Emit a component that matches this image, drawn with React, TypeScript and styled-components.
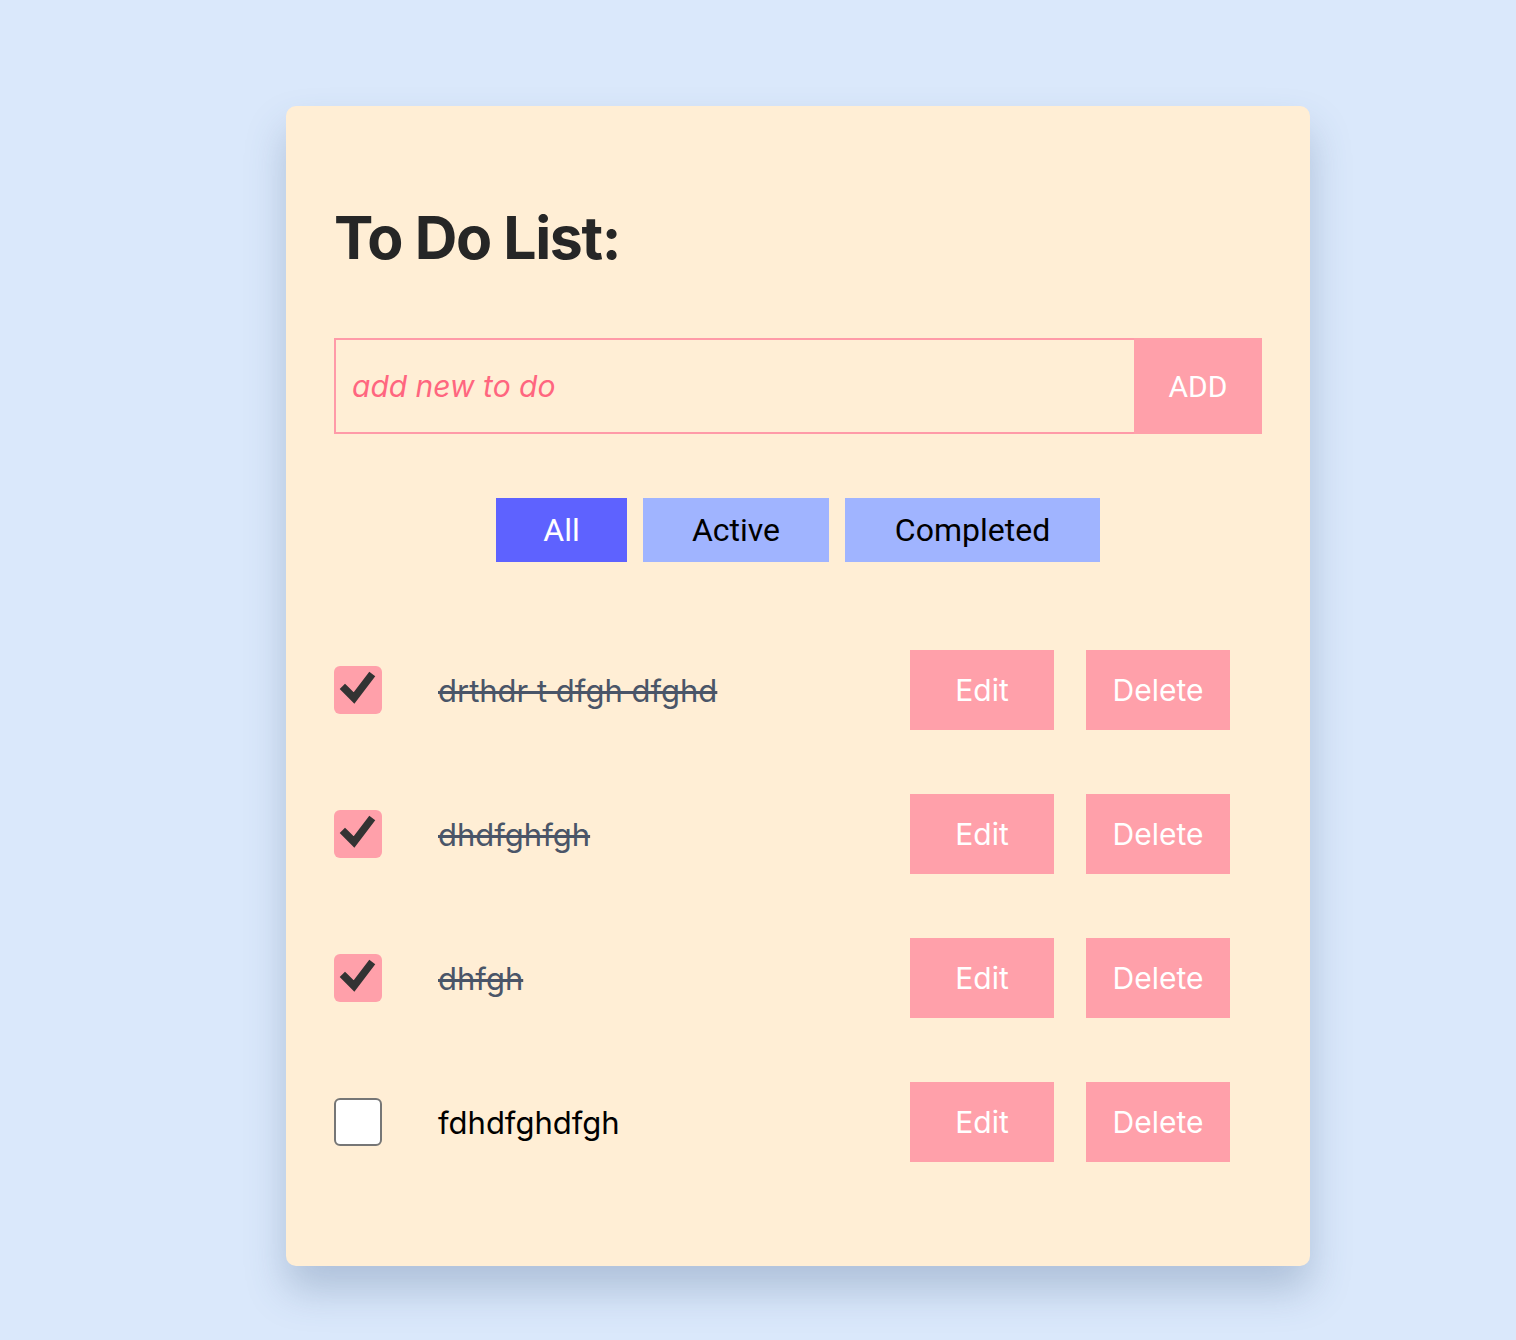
import React, { useState } from "react";
import styled, { createGlobalStyle, css } from "styled-components";

const GlobalStyle = createGlobalStyle`
  html, body { margin: 0; padding: 0; }
  body {
    background: #dae8fb;
    min-height: 1340px;
    font-family: Inter, "Noto Sans", sans-serif;
  }
`;

const Page = styled.div`
  padding: 106px 0 60px 286px;
`;

const Card = styled.div`
  width: 1024px;
  box-sizing: border-box;
  background: #ffeed5;
  border-radius: 10px;
  padding: 100px 48px 104px 48px;
  box-shadow: 0 24px 40px rgba(60, 90, 130, 0.28);
`;

const Title = styled.h1`
  margin: 0 0 68px 0;
  font-size: 59px;
  line-height: 64px;
  font-weight: 700;
  color: #262626;
  letter-spacing: -1.4px;
`;

const AddForm = styled.form`
  display: flex;
  height: 96px;
  margin: 0 0 64px 0;
`;

const TextInput = styled.input`
  flex: 1;
  box-sizing: border-box;
  height: 96px;
  border: 2px solid #ff9aa8;
  border-right: none;
  background: transparent;
  padding: 0 16px;
  font-family: Inter, sans-serif;
  font-size: 30px;
  color: #333;
  outline: none;
  &::placeholder {
    color: #ff667f;
    font-style: italic;
  }
`;

const AddButton = styled.button`
  width: 128px;
  height: 96px;
  border: none;
  background: #ffa0aa;
  color: #fff;
  font-family: Roboto, sans-serif;
  font-size: 30px;
  cursor: pointer;
`;

const Filters = styled.div`
  display: flex;
  justify-content: center;
  gap: 16px;
  margin-bottom: 88px;
`;

const FilterButton = styled.button<{ $active?: boolean; $w: number }>`
  width: ${(p) => p.$w}px;
  height: 64px;
  border: none;
  font-family: Roboto, sans-serif;
  font-size: 32px;
  cursor: pointer;
  ${(p) =>
    p.$active
      ? css`
          background: #5e62ff;
          color: #fff;
        `
      : css`
          background: #a0b4ff;
          color: #000;
        `}
`;

const List = styled.ul`
  list-style: none;
  margin: 0;
  padding: 0 32px 0 0;
  display: flex;
  flex-direction: column;
  gap: 64px;
`;

const Row = styled.li`
  display: flex;
  align-items: center;
  height: 80px;
  gap: 32px;
`;

const Check = styled.span<{ $checked: boolean }>`
  width: 48px;
  height: 48px;
  box-sizing: border-box;
  border-radius: 6px;
  flex: none;
  display: flex;
  align-items: center;
  justify-content: center;
  ${(p) =>
    p.$checked
      ? css`
          background: #ffa0aa;
        `
      : css`
          background: #fff;
          border: 2px solid #767676;
        `}
`;

const Label = styled.span<{ $done: boolean }>`
  flex: 1;
  margin-left: 24px;
  font-family: Inter, sans-serif;
  font-size: 31px;
  color: ${(p) => (p.$done ? "#4a5568" : "#000")};
  text-decoration: ${(p) => (p.$done ? "line-through" : "none")};
  text-decoration-thickness: 3px;
`;

const ActionButton = styled.button`
  width: 144px;
  height: 80px;
  border: none;
  background: #ffa0aa;
  color: #fff;
  font-family: Inter, sans-serif;
  font-size: 30px;
  cursor: pointer;
`;

const CheckMark = () => (
  <svg width="48" height="48" viewBox="0 0 48 48">
    <path
      d="M11 23 L20 32 L36 11"
      fill="none"
      stroke="#333"
      strokeWidth="7.5"
      strokeLinecap="square"
      strokeLinejoin="miter"
    />
  </svg>
);

const todos = [
  { text: "drthdr t dfgh dfghd", done: true },
  { text: "dhdfghfgh", done: true },
  { text: "dhfgh", done: true },
  { text: "fdhdfghdfgh", done: false },
];

export default function App() {
  const [value, setValue] = useState("");
  return (
    <>
      <GlobalStyle />
      <Page>
        <Card>
          <Title>To Do List:</Title>
          <AddForm onSubmit={(e) => e.preventDefault()}>
            <TextInput
              placeholder="add new to do"
              value={value}
              onChange={(e) => setValue(e.target.value)}
            />
            <AddButton type="submit">ADD</AddButton>
          </AddForm>
          <Filters>
            <FilterButton $active $w={131}>All</FilterButton>
            <FilterButton $w={186}>Active</FilterButton>
            <FilterButton $w={255}>Completed</FilterButton>
          </Filters>
          <List>
            {todos.map((t) => (
              <Row key={t.text}>
                <Check $checked={t.done}>{t.done && <CheckMark />}</Check>
                <Label $done={t.done}>{t.text}</Label>
                <ActionButton>Edit</ActionButton>
                <ActionButton>Delete</ActionButton>
              </Row>
            ))}
          </List>
        </Card>
      </Page>
    </>
  );
}
